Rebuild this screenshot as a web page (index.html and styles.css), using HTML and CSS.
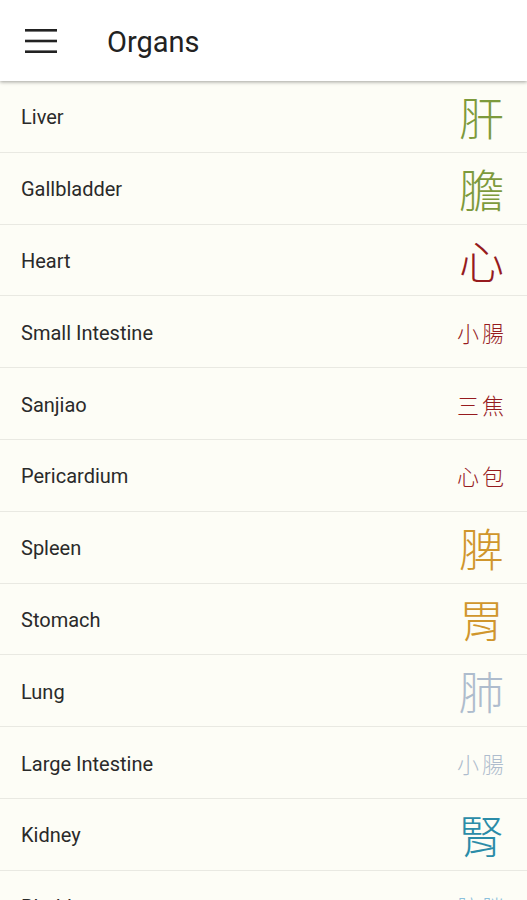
FILE: index.html
```html
<!DOCTYPE html>
<html lang="en">
<head>
<meta charset="utf-8">
<title>Organs</title>
<link rel="stylesheet" href="styles.css">
</head>
<body>
<div class="app">
  <header class="bar">
    <button class="menu" aria-label="Menu">
      <svg width="32" height="24" viewBox="0 0 32 24"><rect x="0" y="0" width="32" height="2.6" fill="#222"/><rect x="0" y="10.7" width="32" height="2.6" fill="#222"/><rect x="0" y="21.4" width="32" height="2.6" fill="#222"/></svg>
    </button>
    <h1 class="title">Organs</h1>
  </header>
  <ul class="list">
    <li class="row"><span class="name">Liver</span><span class="hz big wood">肝</span></li>
    <li class="row"><span class="name">Gallbladder</span><span class="hz big wood">膽</span></li>
    <li class="row"><span class="name">Heart</span><span class="hz big fire">心</span></li>
    <li class="row"><span class="name">Small Intestine</span><span class="hz small fire">小腸</span></li>
    <li class="row"><span class="name">Sanjiao</span><span class="hz small fire">三焦</span></li>
    <li class="row"><span class="name">Pericardium</span><span class="hz small fire">心包</span></li>
    <li class="row"><span class="name">Spleen</span><span class="hz big earth">脾</span></li>
    <li class="row"><span class="name">Stomach</span><span class="hz big earth">胃</span></li>
    <li class="row"><span class="name">Lung</span><span class="hz big metal">肺</span></li>
    <li class="row"><span class="name">Large Intestine</span><span class="hz small metal">小腸</span></li>
    <li class="row"><span class="name">Kidney</span><span class="hz big water">腎</span></li>
    <li class="row"><span class="name">Bladder</span><span class="hz small water2">膀胱</span></li>
  </ul>
</div>
</body>
</html>
```
FILE: styles.css
```css
html, body {
  margin: 0;
  padding: 0;
  background: #fdfdf6;
  height: 100%;
  overflow: hidden;
}
body {
  font-family: Roboto, "Noto Sans", sans-serif;
  color: #222;
}
.app {
  display: flex;
  flex-direction: column;
}
.bar {
  position: relative;
  z-index: 2;
  height: 81px;
  background: #ffffff;
  display: flex;
  align-items: center;
  box-shadow: 0 1px 3px rgba(0,0,0,0.25), 0 2px 4px rgba(0,0,0,0.1);
}
.menu {
  border: 0;
  background: none;
  padding: 0;
  margin: 0 0 0 25px;
  width: 32px;
  height: 24px;
  display: flex;
}
.title {
  margin: 3px 0 0 50px;
  font-size: 29px;
  font-weight: 400;
  color: #222;
}
.list {
  list-style: none;
  margin: 0;
  padding: 0;
}
.row {
  height: 70.8px;
  border-bottom: 1px solid #e9e9e2;
  display: flex;
  align-items: center;
  justify-content: space-between;
  padding: 0 23px 0 21px;
}
.name {
  font-size: 20px;
  color: #2a2a2a;
  margin-top: 2px;
}
.hz {
  font-family: "Noto Sans CJK TC", "Noto Sans CJK SC", serif;
  font-weight: 300;
  line-height: 1;
}
.big {
  font-size: 45px;
}
.small {
  font-size: 22px;
  letter-spacing: 3px;
  margin-right: -3px;
}
.wood { color: #7d9a3c; }
.fire { color: #961b1e; }
.earth { color: #d0962c; }
.metal { color: #aebccd; }
.water { color: #2b8ca8; }
.water2 { color: #8cc0dc; }
```
